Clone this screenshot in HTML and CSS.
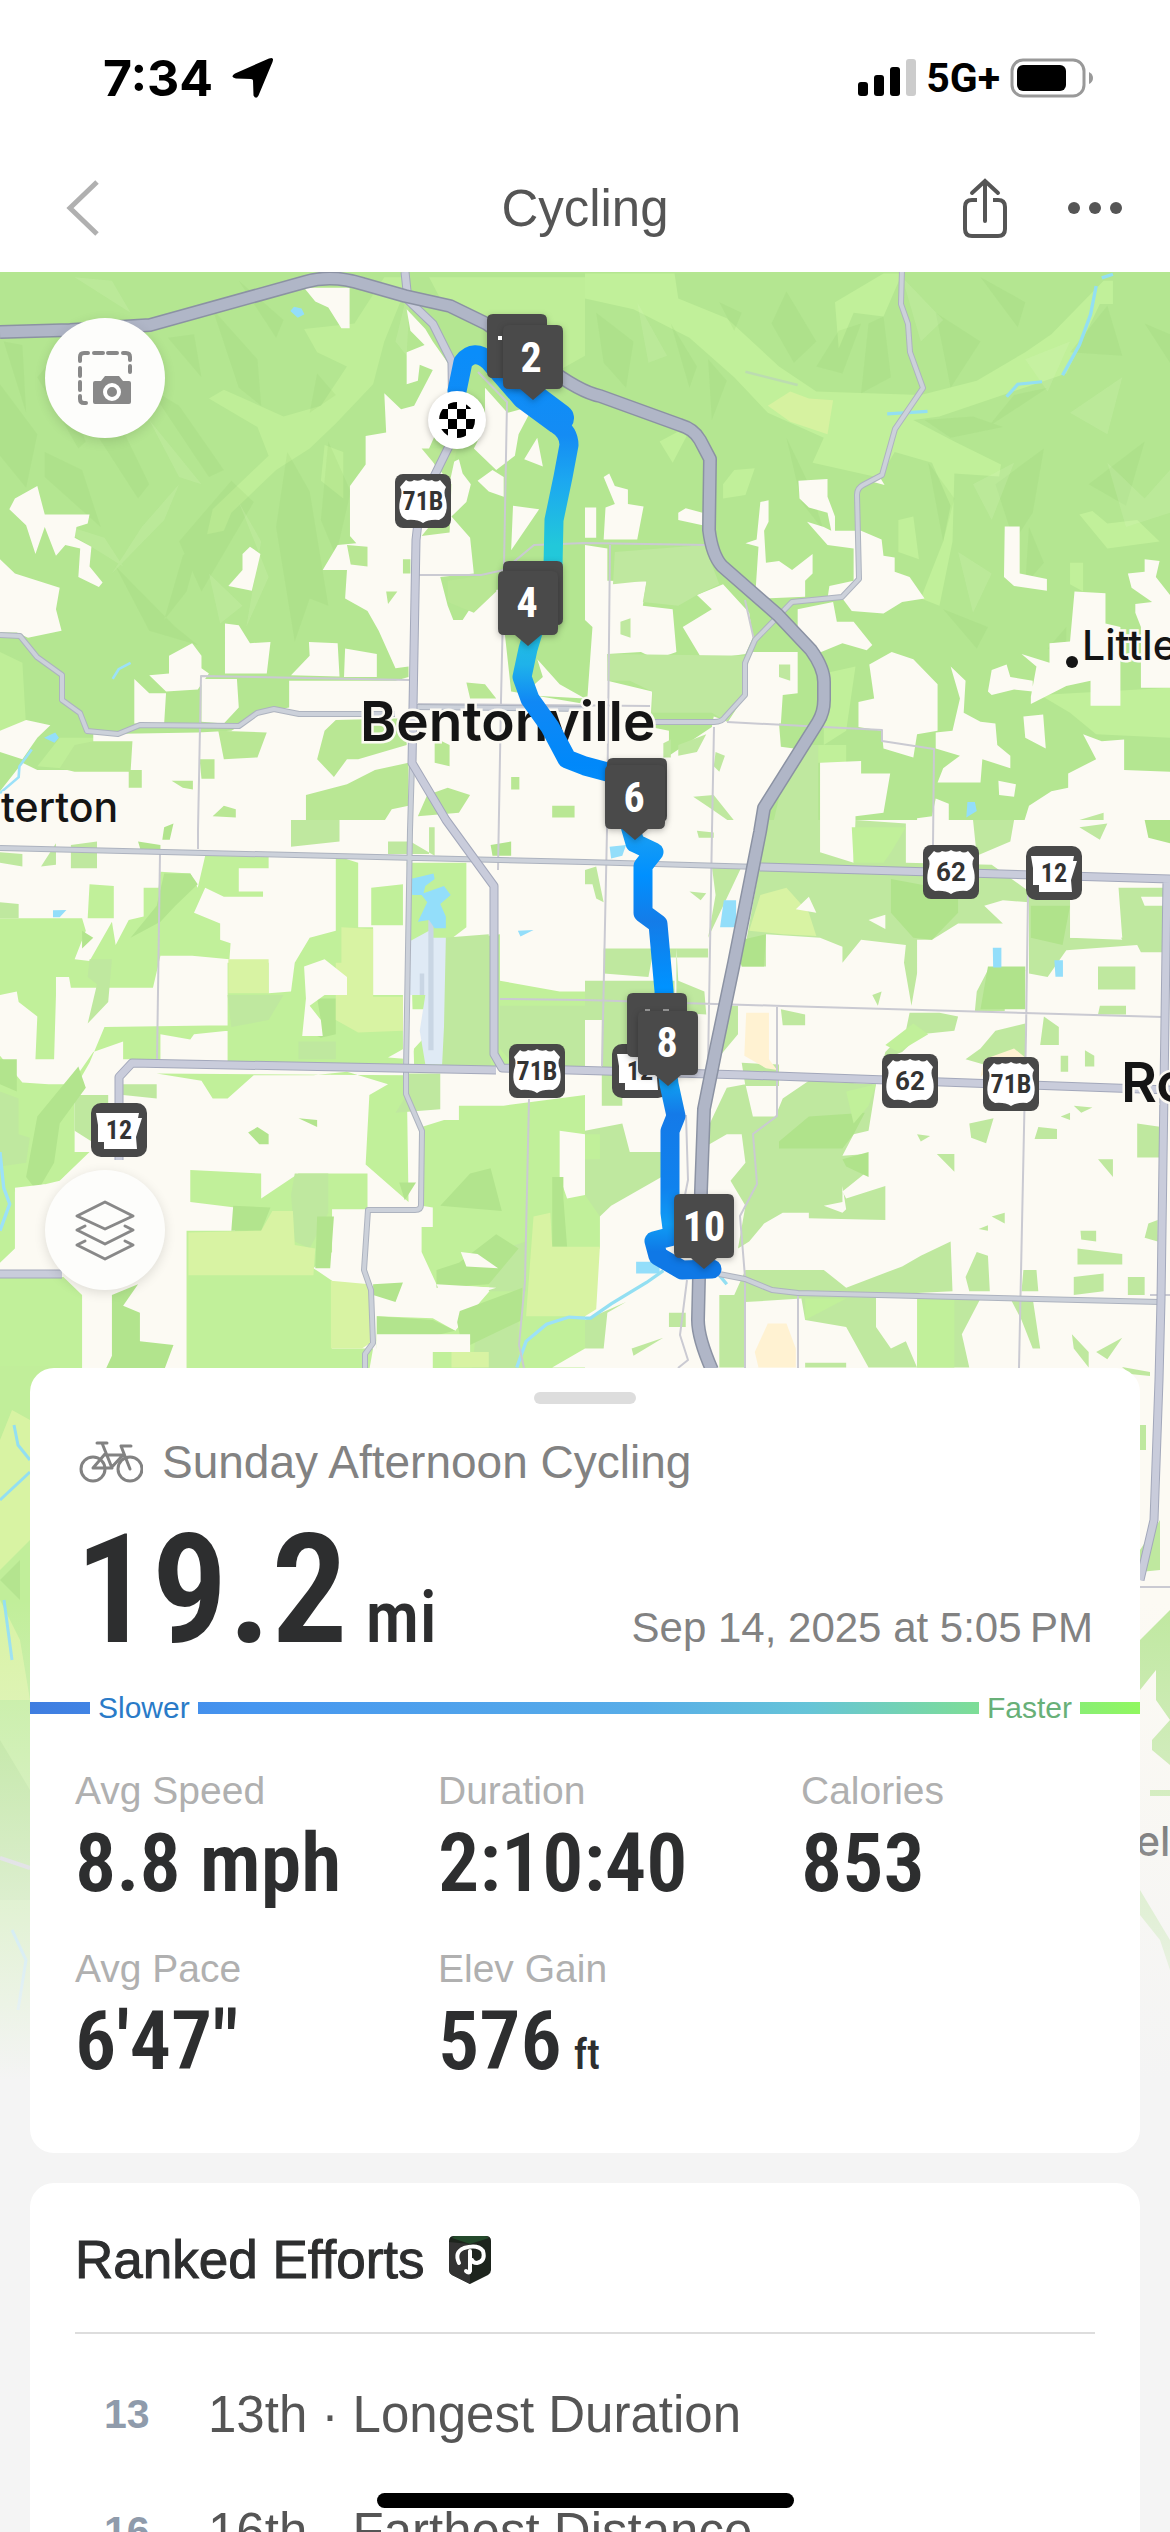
FILE: index.html
```html
<!DOCTYPE html>
<html lang="en">
<head>
    <meta charset="UTF-8">
    <meta name="viewport" content="width=device-width, initial-scale=1">
    <title>Cycling</title>
    <link rel="stylesheet" href="styles.css">
</head>
<body>
    <div class="status">
        <div class="status-side">
            <span class="time">7:34</span>
            <svg width="44" height="42" viewBox="0 0 44 42"><path d="M38 1.500Q43.500-.5 41.500 5L27.500 38.500Q25 43 22.500 38.500L22 23.500Q22 22 20 22L5 21.500Q-1.500 20 4 16.500Z"/></svg>
        </div>
        <div class="status-side">
            <svg width="58" height="38" viewBox="0 0 58 38">
                <rect x="0" y="23" width="10" height="14" rx="3"/>
                <rect x="16" y="16" width="10" height="21" rx="3"/>
                <rect x="32" y="8" width="10" height="29" rx="3"/>
                <rect x="48" y="0" width="10" height="37" rx="3" fill="#ccc"/>
            </svg>
            <span class="network">5G+</span>
            <svg width="84" height="40" viewBox="0 0 84 40">
                <rect x="2" y="2" width="72" height="36" rx="11" fill="none" stroke="#999" stroke-width="3"/>
                <rect x="7" y="7" width="49" height="26" rx="6"/>
                <path d="M79 14q4 2 4 6t-4 6z" fill="#999"/>
            </svg>
        </div>
    </div>

    <header class="nav">
        <button class="icon-btn back" aria-label="Back">
            <svg width="34" height="56" viewBox="0 0 34 56"><path d="M31 2L4 28l27 26" fill="none" stroke="#b0b0b0" stroke-width="5"/></svg>
        </button>
        <h1>Cycling</h1>
        <div class="nav-actions">
            <button class="icon-btn" aria-label="Share">
                <svg width="46" height="62" viewBox="0 0 46 62" fill="none" stroke="#555" stroke-width="4">
                    <path d="M15 23H10Q3 23 3 30V52Q3 59 10 59H36Q43 59 43 52V30Q43 23 36 23H31"/>
                    <path d="M23 44V4M10 16L23 4l13 12" stroke-linecap="round"/>
                </svg>
            </button>
            <button class="icon-btn" aria-label="More">
                <svg width="54" height="12" viewBox="0 0 54 12" fill="#555"><circle cx="6" cy="6" r="6"/><circle cx="27" cy="6" r="6"/><circle cx="48" cy="6" r="6"/></svg>
            </button>
        </div>
    </header>

    <main class="screen">
        <div class="map">
            <svg class="map-art" viewBox="0 272 1170 1928" preserveAspectRatio="xMidYMin slice">
                <defs>
                    <linearGradient id="pace" gradientUnits="userSpaceOnUse" x1="0" y1="353" x2="0" y2="1270">
                        <stop offset="0" stop-color="#0a8dfa"/>
                        <stop offset=".09" stop-color="#148cf4"/>
                        <stop offset=".14" stop-color="#1ca8f0"/>
                        <stop offset=".21" stop-color="#22c8da"/>
                        <stop offset=".28" stop-color="#22c6dc"/>
                        <stop offset=".34" stop-color="#1fb2ea"/>
                        <stop offset=".38" stop-color="#1088f5"/>
                        <stop offset=".45" stop-color="#0088fa"/>
                        <stop offset=".53" stop-color="#159cf5"/>
                        <stop offset=".57" stop-color="#0090ff"/>
                        <stop offset=".62" stop-color="#147ce8"/>
                        <stop offset=".69" stop-color="#0092ff"/>
                        <stop offset=".8" stop-color="#109af0"/>
                        <stop offset=".83" stop-color="#147ae8"/>
                        <stop offset=".91" stop-color="#0f82ee"/>
                        <stop offset=".95" stop-color="#0f9cf5"/>
                        <stop offset=".98" stop-color="#0f78e6"/>
                    </linearGradient>
                    <linearGradient id="fade" x1="0" y1="0" x2="0" y2="1">
                        <stop offset="0" stop-color="#f4f4f4" stop-opacity="0"/>
                        <stop offset="1" stop-color="#f4f4f4"/>
                    </linearGradient>
                    <symbol id="us" viewBox="0 0 56 54">
                        <rect width="56" height="54" rx="8" fill="#484848"/>
                        <path d="M11 6Q15 9 19 6Q24 8 28 5Q32 8 37 6Q41 9 45 6L51 13Q48 18 51 26Q54 42 44 46Q34 45 28 49Q22 45 12 46Q2 42 5 26Q8 18 5 13Z" fill="#fff"/>
                    </symbol>
                    <symbol id="state" viewBox="0 0 56 54">
                        <rect width="56" height="54" rx="10" fill="#484848"/>
                        <path d="M5 10H48L47 15H51L45 34L46 46H13V39H7V22z" fill="#fff"/>
                    </symbol>
                    <symbol id="pin" viewBox="0 0 60 76">
                        <path d="M6 0H54Q60 0 60 6V58Q60 64 54 64H43L30 75L17 64H6Q0 64 0 58V6Q0 0 6 0Z" fill="#4a4a4a"/>
                    </symbol>
                    <path id="hwy" d="M0 332L70 330L150 325L305 282Q332 274 363 284L405 296L450 306L487 324L545 366Q580 392 600 396L680 425Q694 429 700 440L710 459L709 530Q712 555 722 566L778 615L811 650Q824 668 824 682V700Q824 712 818 722L764 808L760 832L734 963L716 1049L704 1109L701 1191L698 1320Q698 1338 712 1370"/>
                    <path id="main" d="M405 272L408 300L433 324L452 362L453 438L420 505L416 540L412 763L446 820L494 886V1054L502 1068L745 1075L1170 1090M119 1160L119 1077L132 1063L496 1070M760 867L1170 879M1167 880L1161 1300L1159 1380L1154 1520L1140 1580M0 1274H62"/>
                    <path id="mid" d="M412 763L410 830L406 1070V1094L422 1131L421 1205Q421 1210 415 1210H368L364 1270L371 1290L373 1343L365 1354V1368M0 848L585 862L760 867M0 635L20 636L37 657L62 675V700L80 713L87 731L118 734L140 725L239 726L257 713L274 709L299 714H395M414 707L585 709M650 722H714Q722 722 725 717L745 695V663L755 640L792 602L842 597L859 579L857 495Q857 488 863 485L882 475L895 429L923 388L910 352L908 324L901 304L902 270M719 1274L745 1279L772 1290L798 1293L1160 1302"/>
                </defs>

                <rect y="272" width="1170" height="1928" fill="#b4e691"/>

                <!-- north west -->
                <g transform="translate(0 270) scale(.3731 .3571)">
                    <path fill="#bfee98" d="M815 165L950 150L1030 20H1100L1030 200L1000 320L900 430L830 500L740 560L620 680L600 730L555 740L570 670L720 520L690 440L560 360L600 335L760 410L860 380L930 270L850 230ZM1150 20H1568V240L1500 280L1300 130L1180 80ZM0 1070L60 1100L70 1280L0 1290ZM870 490L920 510V640L860 590ZM100 1390L160 1310L250 1310L340 1340L350 1390L220 1400ZM820 1470L990 1430L1000 1568H820Z"/>
                    <path fill="#8cc869" fill-opacity=".14" d="M100 300L210 500L230 480L140 250ZM10 200L70 400L60 210ZM240 430L370 640L400 600L330 450ZM400 330L560 580L600 560L480 380ZM570 110L640 330L700 380L690 250ZM640 30L760 140L740 190ZM770 510L740 720L790 1040L830 920L880 940L830 620ZM620 590L480 760L540 900L680 650ZM540 750L490 800L440 980L500 900ZM120 510L220 560L270 720L120 580ZM310 830L470 1000L530 1050L400 1010ZM880 480L940 620L900 800L860 700ZM0 320L100 460L70 610L0 520ZM450 190L540 300L520 180ZM850 290L900 350L830 400Z"/>
                    <path fill="#e0fbc0" fill-opacity=".18" d="M200 20L350 120L300 30ZM480 600L380 720L300 850L440 700ZM640 650L700 760L660 1000L720 860ZM560 850L590 990L650 940ZM130 700L330 830L280 750ZM400 420L540 600L480 580ZM1100 30L1060 200L1090 240Z"/>
                    <path fill="#fcfaf3" d="M815 50H937V163H915L880 105L845 88Z
                        M1090 110L1140 165L1160 200L1200 260L1210 360L1150 500L1170 560L1230 530L1240 570L1262 600L1250 650L1210 690L1260 750L1270 850L1180 860L1200 940L1215 980L1240 980L1290 900L1340 895L1370 1180L1568 1215V1568H210L0 1568V1460L60 1380L100 1400H340L350 1330L250 1325V1300L530 1295L620 1290L670 1260L700 1240L775 1225V1150L1060 1150L1095 1140V1110L1060 1115L1015 1010L985 955L925 920L930 840H865L905 770L955 765L938 745V605L980 545V465L1035 455L1030 345L1075 390L1110 380L1160 280L1125 265L1120 310L1090 320V230L1138 210L1100 170Z
                        M100 605L120 685H240L235 710L205 720L200 750L245 775L240 830L275 875L265 888L210 860L215 780L175 770L150 800L120 720L95 795L70 715L25 670L40 640Z
                        M0 810L40 850L160 890L150 950L165 1010L75 1030L45 1015H0Z
                        M670 775L698 795L675 898L612 885L650 840V795Z
                        M603 990L640 995L670 1045L725 1042L715 1130H603Z
                        M515 1045L540 1080V1115L560 1130L530 1175L445 1180L400 1135L453 1130V1080Z
                        M828 1042L905 1045L910 1138L780 1135L830 1080Z
                        M925 1060L1010 1075V1140H922Z
                        M360 1145L400 1185H445L440 1270H360Z
                        M540 1145H635L640 1225L600 1270L540 1265Z
                        M0 1290L70 1260L135 1275L100 1310L60 1370L0 1350Z
                        M1280 590L1320 560L1350 580V635L1310 620ZM1375 660L1445 670L1370 785ZM1440 470L1455 550L1405 530ZM1300 330L1360 400L1430 380L1390 460L1380 520L1330 560L1270 500L1300 440Z M1440 1090L1455 1140L1400 1190L1568 1200L1500 1160Z"/>
                    <path fill="#b9e794" d="M1130 500L1225 500L1200 620L1165 700L1130 745L1205 735L1210 600ZM1035 900H1065L1040 935ZM930 770L985 775V830L940 825ZM585 1290L715 1295L690 1365L600 1370ZM900 1260L1090 1255V1330L960 1370H930L895 1420L850 1370L870 1290ZM250 1320H355L350 1405H200L160 1395L200 1330ZM345 1400H380V1450H345ZM535 1370H575V1425H540ZM460 1430H517V1455L490 1450ZM570 1530L600 1500L632 1510V1533ZM1005 1400L1095 1380V1500L1050 1510L1020 1560H820V1470L930 1440ZM1165 1310L1205 1330V1390L1165 1380ZM1145 1470L1200 1450L1260 1470L1230 1520L1120 1530ZM1250 1155L1300 1160L1330 1200L1260 1200ZM1200 870L1330 850V900L1270 960L1200 930ZM1480 1500H1540V1533H1480ZM1370 1420H1392V1455H1370ZM1080 810H1100V850H1080Z"/>
                    <path fill="#93defa" d="M778 115l10-12 20 5 8 16-18 10zM118 1310l30-15 10 15-12 14z"/>
                    <path fill="none" stroke="#9ce1f8" stroke-width="7" d="M302 1145L318 1118L350 1100M85 1343L52 1390L50 1420L0 1465"/>
                </g>

                <!-- north east -->
                <g transform="translate(585 270) scale(.3731 .3571)">
                    <path fill="#c1f09a" d="M0 10H240L250 80L380 135L520 270L620 340L900 350L1050 310L1180 230L1250 180L1390 30H1415V95H1380L1290 290L1120 350L950 410L880 420L990 480L1115 545L1110 578L990 570L985 760L950 940L900 920L960 760L980 660L930 540L830 510L790 582L610 540L640 470L490 400L400 300L280 190L130 110L0 80ZM670 90L800 10H850L800 130L720 120L680 220ZM370 600L400 560L455 555L430 630L370 640ZM200 480L290 430L235 540ZM840 700L880 690L895 810L840 790ZM1325 685L1360 675L1400 710L1480 700L1540 760L1400 780ZM1300 820H1335V900L1300 880ZM640 1130L725 1110L700 1290L640 1330ZM1220 1190L1568 1170V1310L1370 1300L1300 1240ZM600 1330H700V1380H620Z"/>
                    <path fill="#d6f2a0" d="M490 380L550 340L600 360L665 365L650 460L550 425Z"/>
                    <path fill="#8cc869" fill-opacity=".15" d="M360 90L420 120L400 170ZM540 60L620 200L560 260L500 150ZM620 270L680 170L740 150L690 290ZM760 150L800 130L820 300L740 345ZM30 120L130 200L110 330L50 260ZM230 150L300 270L280 330ZM330 250L380 310L340 420ZM940 120L1060 200L980 330ZM1060 20L1160 160L1180 90ZM910 420L1040 410L1120 440L980 470ZM1080 440L1150 350L1240 330ZM920 540L990 640L960 760ZM1100 600L1230 500L1200 680L1150 760ZM1300 230L1400 100L1440 240ZM1190 720L1230 820L1180 880ZM540 470L600 600L640 730L580 650ZM960 950L1050 1060L1080 1000ZM1500 150L1568 260V180ZM1350 600L1500 480L1450 660ZM1240 1060L1290 1000V1080Z"/>
                    <path fill="#e0fbc0" fill-opacity=".18" d="M850 20L960 140L900 200ZM1180 250L1300 200L1240 340ZM1300 400L1440 300L1400 460ZM1040 600L1150 540L1090 700ZM140 90L220 240L170 260ZM1400 540L1500 640L1568 560V680L1450 720ZM1000 790L1090 850L1040 960Z"/>
                    <path fill="#fcfaf3" d="M0 665H30V750H0ZM50 580L65 570L80 605L115 615V655L157 662L140 755H50L55 665L80 655Z
                        M250 680L270 667L315 680V715L250 700ZM470 650L492 645V705L480 730L485 820L520 815L555 840L610 795V850L590 870V915L480 920L457 900L465 775L430 765L460 755Z
                        M572 590L650 585V635L670 690V730H740L795 755L800 800L830 805V845L870 860L910 920L850 930L800 962L715 955L690 920H650L655 885L720 870V780L650 770L595 705L640 720L660 730L650 680L600 665L575 640ZM760 590L790 580L803 602Z
                        M570 950L665 930L675 985L720 985L770 1050L755 1065L690 1045L620 1075L570 1030Z
                        M0 770L60 780V870L165 872L155 940L235 950L245 1070L190 1090L150 1070L60 1075V1150L180 1180L175 1280L225 1290V1360L340 1280L345 1250L385 1265L520 1270L525 1335L560 1340L490 1460L455 1560L0 1568V1290L20 1000L0 980Z
                        M262 1000L340 950L300 910L370 880L440 960L450 1030L430 1075L315 1092ZM440 1070H570V1185L530 1190L525 1270H380L430 1190Z
                        M822 1070L880 1090L945 1160V1290L890 1300L880 1365L800 1340L795 1290L733 1280V1210L775 1200L762 1105Z
                        M980 1110L1020 1150L1015 1240L1060 1265L1100 1270L1105 1330L1140 1360V1395L1065 1370L1060 1435H945L960 1395L1005 1360L940 1340V1295L985 1290L1005 1200Z
                        M1125 718H1165V850L1238 865V898L1150 885L1123 860Z M1312 900L1395 905V990L1435 1000V1220H1355V1150L1290 1165L1195 1215V1195L1210 1110L1170 1075L1245 1100V1045L1300 1040ZM1455 850L1500 845V810L1540 815L1530 860L1568 910V1170H1490V1000L1475 960V935L1520 930L1465 890Z
                        M1080 1180L1090 1120L1130 1105L1140 1140L1200 1150V1180L1150 1175L1090 1190ZM1175 1250L1228 1245L1235 1340L1180 1310Z
                        M1335 1300L1385 1320L1445 1315V1400L1568 1405V1568H1170L1190 1500L1250 1460L1295 1450V1410L1370 1370ZM630 1380L740 1375L740 1410H818L800 1520L725 1530V1568H630ZM940 1480L975 1495V1568H890V1535L930 1530ZM1108 1430L1155 1440L1150 1475L1110 1470Z"/>
                    <path fill="#bfe89f" d="M60 1075L435 1080L430 1190L380 1265L340 1240L180 1240V1180L120 1150H65ZM80 790L320 770L360 880L300 910L250 940L155 930L165 870L75 880ZM540 1390L600 1330H625V1568H500ZM95 985L122 975V1030L95 1020ZM520 1105H550V1150L520 1140ZM210 1325L230 1315V1365H210ZM250 1330L325 1300L300 1350L250 1360ZM350 1350L375 1360L360 1405L345 1390ZM290 1475L345 1470L420 1568L340 1510ZM1325 1540L1390 1520V1555H1325Z"/>
                    <path fill="none" stroke="#93dff2" stroke-width="9" d="M1385 22L1415 12M1370 45L1355 125L1325 210L1280 295M1130 355L1160 320L1225 313M810 403L918 396"/>
                    <path fill="none" stroke="#bcdcb0" stroke-width="7" d="M430 285L570 322"/>
                    <path fill="#93defa" d="M1025 1490l20 0 5 25-28 18z"/>
                </g>

                <!-- south west -->
                <g transform="translate(0 820) scale(.3731 .3571)">
                    <path fill="#fcfaf3" d="M0 0H1568V1568H0Z"/>
                    <path fill="#c1f09a" d="M0 275H220L230 310L200 390L240 395L300 285L310 350L345 280L385 270V190H425L430 145L510 150L530 190L550 100H720V135H640V200H705V215H600L550 190L520 260L590 290V335L618 345L615 390L515 380H430L410 470H190L185 440H150V490L145 670H95L100 550L50 510L45 480L0 490Z
                        M240 180L305 185V275H235ZM900 100L960 120V300H1000V600L610 610V400H720V485L780 480L790 400L830 330L900 310ZM995 190L1080 180V295H995ZM280 580L610 575V590L520 600L510 615L430 600V670H330V620L250 650L190 740L130 740L60 735L0 660V1568H220V1330L170 1280H0V1240L40 1200V1040L160 1010L240 930H200V770H190L240 680Z
                        M610 490H1080V690H610ZM420 710L1090 715L1095 1070L980 965L990 770L1040 740L930 705L840 715H680L610 780H570L540 730L420 710ZM510 980L700 990V1060L800 990L985 990V1090L890 1090V1210L840 1255L890 1290V1480H1000L985 1568H500V1150L630 1150V1085L510 1070Z
                        M1090 120H1250V300L1200 340L1340 320V450L1500 480H1568V690H1110L1100 320ZM1190 840H1230V800H1350L1568 770V880L1500 870V1000L1520 1060L1568 1050V1568H1160V1490L1010 1480V1390L1160 1395L1220 1430L1320 1310L1170 1300L1130 1210V1140L1160 1140V1085L1130 1080L1130 860Z"/>
                    <path fill="#bfe89f" d="M780 0H910V60L780 75ZM0 90L60 95V130L0 120ZM190 70L260 60V135H190ZM110 130L150 65V125ZM1100 60L1040 60V95H1150V20H1165V100ZM240 390H300L290 510L235 570L260 460L235 440ZM610 490H760L720 560L620 580ZM0 230L50 235V275H0ZM1190 330L1310 320L1315 690H1185ZM1340 520H1568V690H1380L1340 640ZM200 770H290V930L200 870ZM0 760L50 780V880L80 890L70 960L0 970ZM780 1050L790 990H880V1100L830 1200L790 1180ZM1090 710H1180V810L1060 820L1090 770ZM1320 1210L1410 1180V1320H1310ZM1280 1410L1390 1340V1568H1260ZM330 740H420V780L330 770ZM800 620H900V670H800Z"/>
                    <path fill="#b2e48d" d="M440 150H510L530 180L470 240L430 285L350 330L420 240ZM850 500H900V600L860 610L820 590L860 560ZM100 830L210 690L230 750L160 850L145 960L100 1040L70 1000ZM0 670H45V760L0 740ZM625 1080L725 1085L700 1150H620ZM1180 1080L1260 990L1315 975L1345 1095ZM370 1300L330 1360L375 1380V1460L465 1470L430 1568H270L300 1500V1330ZM850 1110H895L885 1255H845ZM1480 1000H1510V1060L1520 1195H1480ZM1230 1240L1330 1160L1390 1200L1310 1300L1170 1310V1260ZM1010 1390L1160 1400L1220 1430L1100 1460H1010ZM1000 1300L1080 1295L1060 1350L1000 1330ZM1220 1380L1400 1310V1400L1240 1480ZM250 330L220 360V310ZM370 60L430 70V95H380ZM440 20L465 10L455 55H435ZM800 835L850 840V860ZM665 875L690 860L720 880V908H695ZM1070 1015H1115L1085 1065ZM1315 70L1370 60V100H1320Z"/>
                    <path fill="#d8f3a3" d="M915 300L1000 305V495H1080V590L960 595L900 560V400H915ZM612 390H720V485H612ZM505 1155L700 1150L730 1095H785L790 1190L845 1200L840 1275H505ZM887 1290L990 1300L1000 1460L970 1480H887ZM1430 1110L1475 1100L1480 1195H1568V1390H1410ZM1210 1490H1310V1533H1210Z"/>
                    <path fill="#fcfaf3" d="M815 410L870 390L930 440V490H870L830 520L860 560L865 605H810L820 500ZM1100 530H1145V600L1110 640L1100 670L1040 665L1100 630ZM1340 170L1430 175L1420 240L1340 235ZM1350 290L1430 350L1420 380L1500 440L1490 475L1380 455L1340 440ZM1235 1210L1280 1215L1335 1255L1250 1250ZM1010 1440H1260V1490H1010ZM40 1030L120 1020V1165H45ZM1480 1533L1568 1480V1533ZM1330 1310L1170 1300L1220 1430L1240 1340Z"/>
                    <path fill="#dfeaf5" d="M1097 340L1150 310L1150 330H1195L1190 580L1185 685H1140L1125 590L1140 490H1097Z"/>
                    <path fill="#c9d6e4" d="M1148 265h14V645h-14zM1125 430h12v60h-12z"/>
                    <path fill="#93defa" d="M1100 165L1162 150L1165 165L1140 185L1135 205L1190 185L1208 210L1180 235L1195 270V303H1165L1150 280L1120 285L1145 230L1130 210H1105ZM142 253L178 252L160 272H142ZM1388 310L1430 308L1395 326Z"/>
                    <path fill="none" stroke="#9ce1f8" stroke-width="9" d="M0 930L10 1030L26 1075L0 1150M1385 1533L1410 1460L1465 1412L1525 1392L1568 1395"/>
                </g>

                <!-- south east -->
                <g transform="translate(585 820) scale(.3731 .3571)">
                    <path fill="#fcfaf3" d="M0 0H1568V1568H0Z"/>
                    <path fill="#bfe89f" d="M490 0H630V90L720 120L725 0L860 10V120L1090 125L1190 200V230L1120 225L1070 240L1120 290H1000L930 335H890V430L875 520L855 400L860 350L740 335L690 400V355L630 330L485 320V410L420 410ZM1040 0H1150L1140 60L1050 100ZM1190 200H1300V330H1568V370L1490 370L1480 350L1290 365L1240 440L1190 430ZM1050 480L1080 420H1180L1170 490H1125V535H1045ZM1375 410H1475V475H1375ZM1430 190H1568V330H1440Z
                        M0 140L30 130L50 230L30 220L20 180H0ZM50 360H330V385H180L170 440L50 430V360L100 350ZM0 450H240V560L300 540V690L100 705V800H45V560H0ZM245 360V540L325 545L320 480L250 450ZM340 130H420L330 330L350 210ZM385 520H410V600L330 700L380 560ZM0 870L100 850L120 930L205 930V1000L70 1080L30 1120L0 1200ZM330 860L380 750L430 740L450 830H510L530 780L600 730L780 740L760 870L720 880L690 940L755 935L750 990L690 1040L700 1060L805 1025V1120L600 1115V1100H530L480 1130L440 1180L410 1200L430 1080L390 1010L430 960L420 880H380L330 910ZM420 680L520 685V745H430ZM525 530L590 545V575H530ZM805 650L860 590L870 540H950L1000 550L990 590L900 600L850 650L800 670ZM1100 590L1180 570V700H1120L1020 670L1060 640ZM1230 550L1270 580V630H1220ZM1480 850L1545 860V945H1480ZM1380 520H1450V545H1375ZM1030 850L1095 835L1075 905L1035 890ZM1215 860L1265 865V893H1205ZM943 935H990V985ZM1328 1150H1370V1180L1330 1175ZM1320 1200L1440 1215V1245H1320ZM1090 1110L1125 1100V1130ZM890 880L925 885L900 900ZM1375 950H1415V1000ZM770 490L795 480L785 520ZM1275 660H1295V705H1275ZM1340 645L1365 660V690H1340ZM1275 830L1300 820V840ZM1310 800L1360 805L1330 820ZM1055 1145L1080 1135V1150ZM280 200L325 205L310 225ZM300 30L345 35V50H305ZM1325 20L1400 10L1380 55ZM0 1400L110 1350L60 1380L50 1480L0 1480Z
                        M430 1260L640 1260L700 1310L850 1250L900 1220L980 1180L985 1320L780 1330V1420L820 1480L860 1460L890 1533H760L700 1420L590 1400L580 1340L430 1350V1533H360V1330H400ZM1020 1280L1050 1210L1080 1220L1085 1320H1030ZM1175 1260L1210 1260L1215 1320H1170ZM1310 1280L1390 1270V1320L1310 1330ZM1455 1280H1500V1330H1455ZM1140 1340H1200L1220 1480H1200L1170 1400ZM1305 1440L1350 1490V1533L1310 1480ZM1370 1490L1440 1450L1400 1510ZM225 1380H270V1420H225ZM125 1480L210 1450L130 1500ZM1510 1130L1535 1120V1180L1500 1170ZM590 1520H700V1533H590ZM900 1340H1060L1010 1440L1030 1533H890Z"/>
                    <path fill="#b0e38b" d="M820 165L1000 200V260L930 335L880 330L820 260ZM520 900L600 830L750 820L720 880L690 920H520ZM1080 410H1180V530H1060ZM1195 240H1300L1280 350L1195 330ZM400 340L485 320L480 410H420ZM690 950L760 930V1000L700 970ZM1500 0H1568V65L1510 50Z"/>
                    <path fill="#c1f09a" d="M715 20H860L820 90L800 120H720ZM805 630L880 570L920 600L840 650ZM700 760L780 740L760 800L720 850ZM590 1340H700L590 1400ZM890 1340H990V1533H890ZM0 880H40V950H0ZM0 1050L40 1110V1200H0Z"/>
                    <path fill="#d8f3a3" d="M440 310L470 210L540 190L600 260L620 325L530 320ZM0 1195H40L30 1370L0 1390Z"/>
                    <path fill="#fff2d2" d="M432 540H493V670L515 700L485 695L427 660ZM490 1410H540L565 1480V1533H465L455 1490ZM1070 670L1150 640L1180 665L1100 680L1060 720Z"/>
                    <path fill="#fcfaf3" d="M565 250L600 215L620 260ZM760 280L805 265V305ZM640 1080L690 1070V1025L700 1090L690 1100ZM1300 330L1320 230L1400 200L1420 300L1440 335ZM1200 590H1220V620H1195ZM1490 215H1550V240H1500Z"/>
                    <path fill="#93defa" d="M66 75L110 70L100 100L70 108ZM372 225L405 225V300H362ZM1093 358h23v55h-22zM1258 393h23v46h-20zM137 1237H200V1270H137Z"/>
                    <path fill="none" stroke="#93dff2" stroke-width="9" d="M210 1262L165 1295L70 1355L15 1395H0M360 1275L380 1300"/>
                </g>

                <!-- strips either side of the card -->
                <path fill="#c1ee9a" d="M0 1366H60V2200H0Z"/>
                <path fill="#d8f3a3" d="M0 1440L12 1410L30 1420V1540L0 1570ZM0 1600L20 1640L30 1700H0Z"/>
                <path fill="#b4e48f" d="M0 1740L30 1790V1900H0ZM0 1580L20 1560V1600Z"/>
                <path fill="none" stroke="#93dff2" stroke-width="3" d="M14 1425L18 1445L30 1460M30 1472L0 1500M4 1600L12 1660M12 1930L26 1960L18 2010"/>
                <path fill="none" stroke="#cfd0d8" stroke-width="4" d="M0 1858L30 1868"/>
                <path fill="#fcfaf3" d="M1110 1367H1170V2200H1110Z"/>
                <path fill="#bfe89f" d="M1122 1367L1150 1372V1376L1130 1374ZM1140 1425H1146V1450H1140ZM1140 1550L1160 1520V1570L1140 1572ZM1140 1640L1170 1610V1720L1156 1700V1670L1140 1690ZM1150 1790H1170V1796H1150ZM1152 1740L1170 1720V1765L1152 1750ZM1140 1890L1170 1940V1970L1160 1940L1140 1915Z"/>

                <g class="roads">
                    <path class="minor" d="M198 849V830L201 676L409 680M160 854L157 1061M478 372L507 402L504 566L501 700L498 870M418 575H481L504 570L534 545L585 543L708 545M418 704L650 706M610 545L607 830L602 1066M714 727L712 830L708 1066M727 722L882 730V741L934 749L933 845M500 999L585 1000L783 1006L1163 1017M777 1006V1116L753 1134L757 1184L740 1216L745 1277V1368M1028 895L1026 1034L1019 1368M529 1099L525 1281L519 1345L524 1368M798 1295V1368M745 600L754 640M687 1280L680 1335L688 1360L678 1368M686 1115L688 1180L684 1200M1140 1587H1170M1150 1295H1170"/>
                    <use href="#mid" class="mid-case"/><use href="#mid" class="mid"/>
                    <use href="#main" class="main-case"/><use href="#main" class="main"/>
                    <use href="#hwy" class="hwy-case"/><use href="#hwy" class="hwy"/>
                </g>

                <g class="shields">
                    <use href="#us" x="395" y="474" width="56" height="54"/><text x="423" y="510">71B</text>
                    <use href="#us" x="509" y="1044" width="56" height="54"/><text x="537" y="1080">71B</text>
                    <use href="#us" x="983" y="1057" width="56" height="54"/><text x="1011" y="1093">71B</text>
                    <use href="#state" x="91" y="1103" width="56" height="54"/><text x="119" y="1139">12</text>
                    <use href="#state" x="1026" y="846" width="56" height="54"/><text x="1054" y="882">12</text>
                    <use href="#state" x="612" y="1044" width="56" height="54"/><text x="640" y="1080">12</text>
                    <g class="wide">
                        <use href="#us" x="923" y="845" width="56" height="54"/><text x="951" y="881">62</text>
                        <use href="#us" x="882" y="1054" width="56" height="54"/><text x="910" y="1090">62</text>
                    </g>
                </g>

                <g class="places">
                    <text class="city" x="360" y="741">Bentonville</text>
                    <text class="city" x="1121" y="1102">Ro</text>
                    <text x="1" y="822">terton</text>
                    <text x="1082" y="660">Little</text>
                    <text x="1136" y="1856">el</text>
                    <circle cx="1072" cy="662" r="6"/>
                </g>

                <g class="route">
                    <path d="M457 391L463 362Q474 348 489 361L522 399L556 424Q569 432 569 445L563 477L554 520L553 566L528 649L522 677L530 699L550 727L567 759L585 766L615 774L635 843L654 852L643 866V913L658 924L664 991L666 1060L669 1084L676 1116L670 1131V1213L673 1236L654 1241L658 1256L682 1270L712 1269"/>
                    <path class="overlap" d="M520 388L560 418"/>
                </g>

                <g class="pins">
                    <use href="#pin" x="487" y="314" width="60" height="76"/>
                    <use href="#pin" x="503" y="325" width="60" height="76"/>
                    <rect x="498" y="336" width="4" height="4" fill="#fff"/>
                    <text x="531" y="372">2</text>
                    <use href="#pin" x="503" y="561" width="60" height="76"/>
                    <use href="#pin" x="498" y="571" width="60" height="76"/>
                    <text x="527" y="617">4</text>
                    <use href="#pin" x="607" y="758" width="60" height="76"/>
                    <use href="#pin" x="605" y="765" width="60" height="76"/>
                    <text x="634" y="812">6</text>
                    <use href="#pin" x="627" y="993" width="60" height="76"/>
                    <use href="#pin" x="638" y="1011" width="60" height="76"/>
                    <path d="M645 1010h5M663 1010h6" stroke="#ddd" stroke-width="1"/>
                    <text x="667" y="1057">8</text>
                    <use href="#pin" x="674" y="1194" width="60" height="76"/>
                    <text x="704" y="1241">10</text>
                </g>

                <g class="finish">
                    <circle cx="457" cy="420" r="29" fill="#fff"/>
                    <clipPath id="ball"><circle cx="457" cy="420" r="18"/></clipPath>
                    <path clip-path="url(#ball)" d="M448 400h9v9h-9zM466 400h9v9h-9zM439 409h9v10h-9zM457 409h9v10h-9zM448 419h9v10h-9zM466 419h9v10h-9zM439 429h9v10h-9zM457 429h9v10h-9z"/>
                </g>

                <rect y="1600" width="1170" height="480" fill="url(#fade)"/>
                <rect y="2079" width="1170" height="121" fill="#f4f4f4"/>
            </svg>

            <button class="map-btn snapshot" aria-label="Snapshot">
                <svg width="54" height="54" viewBox="0 0 54 54">
                    <path d="M2 10V6Q2 2 6 2H10M16 2h9M30 2h9M45 2h3Q52 2 52 6V9M52 15v6M2 17v8M2 31v8M2 45v3Q2 52 6 52H8" fill="none" stroke="#888" stroke-width="4" stroke-linecap="round"/>
                    <path d="M16 30H23L27 25H41L45 30H51Q53 30 53 32V51Q53 53 51 53H17Q15 53 15 51V32Q15 30 17 30Z" fill="#888"/>
                    <circle cx="34" cy="41" r="7" fill="none" stroke="#fff" stroke-width="4"/>
                </svg>
            </button>
            <button class="map-btn layers" aria-label="Map layers">
                <svg width="62" height="62" viewBox="0 0 62 62" fill="none" stroke="#888" stroke-width="3" stroke-linejoin="round" stroke-linecap="round">
                    <path d="M31 3L59 17L31 30L3 17ZM11 27L3 31L31 45L59 31L51 27M11 42L3 46L31 60L59 46L51 42"/>
                </svg>
            </button>
        </div>

        <div class="sheet">
            <section class="card summary">
                <div class="handle"></div>
                <div class="activity">
                    <svg width="64" height="44" viewBox="0 0 64 44" fill="none" stroke="#828282" stroke-width="3" stroke-linecap="round" stroke-linejoin="round">
                        <circle cx="14" cy="29" r="12"/><circle cx="51" cy="29" r="12"/>
                        <path d="M18 3H28M23 3L33 28M27 15H44L32 28H14L26 14M51 29L42 6H52"/>
                    </svg>
                    <h2>Sunday Afternoon Cycling</h2>
                </div>
                <div class="headline">
                    <p class="distance">19.2<span>mi</span></p>
                    <p class="date">Sep 14, 2025 at 5:05&#8239;PM</p>
                </div>
                <div class="pace-bar">
                    <span class="slower">Slower</span>
                    <span class="faster">Faster</span>
                </div>
                <dl class="stats">
                    <div><dt>Avg Speed</dt><dd>8.8 mph</dd></div>
                    <div><dt>Duration</dt><dd>2:10:40</dd></div>
                    <div><dt>Calories</dt><dd>853</dd></div>
                    <div><dt>Avg Pace</dt><dd>6'47"</dd></div>
                    <div><dt>Elev Gain</dt><dd>576<span>ft</span></dd></div>
                </dl>
            </section>

            <section class="card efforts">
                <div class="efforts-head">
                    <h3>Ranked Efforts</h3>
                    <svg width="42" height="48" viewBox="0 0 42 48">
                        <path d="M5 0H37Q42 0 42 5V34Q42 37 39 39L21 48L3 39Q0 37 0 34V5Q0 0 5 0Z" fill="#1d241d"/>
                        <path d="M3 2Q4 0 6 0H36Q39 0 40 2L21 8Z" fill="#24492b"/>
                        <path d="M0 6L21 8V48L3 39Q0 37 0 34Z" fill="#333"/>
                        <path d="M10 27Q5 16 15 12Q29 8 34 15Q37 25 28 27Q24 27 23 24M21 15V35Q20 38 17 35" fill="none" stroke="#fff" stroke-width="4" stroke-linecap="round"/>
                    </svg>
                </div>
                <ol class="effort-list">
                    <li><span class="rank">13</span>13th · Longest Duration</li>
                    <li><span class="rank">16</span>16th · Farthest Distance</li>
                </ol>
            </section>
        </div>
    </main>
    <div class="home-bar"></div>
</body>
</html>
```
FILE: styles.css
```css
* { box-sizing: border-box; margin: 0; padding: 0; }
body { height: 100vh; overflow: hidden; display: flex; flex-direction: column; background: #fff; font-family: "Liberation Sans", Arial, sans-serif; color: #2d2e2f; }
button { border: none; background: none; cursor: pointer; }
svg { display: block; flex: none; }

/* status bar */
.status { height: 144px; padding: 12px 76px 0 103px; display: flex; align-items: center; justify-content: space-between; color: #000; font-weight: 700; }
.status-side { display: flex; align-items: center; gap: 10px; }
.time { font-family: Inter, sans-serif; font-size: 50px; margin-right: 8px; }
.network { font-family: Roboto, sans-serif; font-size: 41px; }

/* title bar */
.nav { height: 128px; padding: 0 48px; display: grid; grid-template-columns: 1fr auto 1fr; align-items: center; }
.nav h1 { font-size: 51px; font-weight: 400; color: #555; }
.nav-actions { display: flex; align-items: center; justify-content: flex-end; gap: 60px; }
.icon-btn { justify-self: start; }
.back { margin-left: 18px; }

/* map and sheet share one cell, the sheet lies over the map */
.screen { flex: 1; min-height: 0; overflow: hidden; display: grid; grid-template-columns: minmax(0, 1fr); align-items: start; }
.map, .sheet { grid-area: 1 / 1; }
.map { position: relative; background: #f4f4f4; align-self: stretch; }
.map-art { width: 100%; }
.map-btn { position: absolute; left: 45px; width: 120px; height: 120px; border-radius: 50%; background: #fdfdfb; display: grid; place-items: center; box-shadow: 0 3px 12px rgba(0, 0, 0, .12); }
.snapshot { top: 46px; }
.layers { top: 898px; }

.roads path, .roads use { fill: none; stroke-linejoin: round; }
.minor { stroke: #cacad2; stroke-width: 2; }
.mid-case { stroke: #adb3bf; stroke-width: 6; }
.mid { stroke: #ccd1da; stroke-width: 4; }
.main-case { stroke: #a3a8bb; stroke-width: 9; }
.main { stroke: #c9ccdb; stroke-width: 7; }
.hwy-case { stroke: #8b92a3; stroke-width: 14; }
.hwy { stroke: #b0b6c7; stroke-width: 11; }
.shields text, .pins text { font-family: "Roboto Condensed", Roboto, sans-serif; font-weight: 700; text-anchor: middle; }
.shields text { font-size: 26px; fill: #333; }
.shields .wide text { font-family: Roboto, sans-serif; }
.pins text { font-size: 42px; fill: #fff; }
.pins use, .finish circle { filter: drop-shadow(0 2px 3px rgba(0, 0, 0, .25)); }
.places { fill: #151515; stroke: #fcfaf3; stroke-width: 5; paint-order: stroke; font-family: Inter, sans-serif; font-size: 41px; font-weight: 500; }
.places .city { font-size: 55px; font-weight: 600; }
.places circle { stroke: none; }
.route { fill: none; stroke: url(#pace); stroke-width: 19; stroke-linecap: round; stroke-linejoin: round; }
.overlap { stroke-width: 28; }

/* cards */
.sheet { position: relative; padding: 1096px 30px 0; display: grid; grid-template-columns: minmax(0, 1fr); gap: 30px; }
.card { background: #fff; border-radius: 24px; }
.summary { padding: 24px 0 48px; }
.handle { width: 102px; height: 12px; margin: 0 auto; border-radius: 6px; background: #ddd; }
.activity { display: flex; align-items: center; gap: 19px; height: 52px; margin: 32px 50px 0 49px; color: #828282; }
.activity h2 { font-size: 46px; font-weight: 400; }
.headline { display: flex; align-items: baseline; justify-content: space-between; height: 156px; margin: 24px 47px 0 45px; }
.distance, .stats dd { font-family: "Roboto Condensed", Roboto, sans-serif; font-weight: 600; }
.distance { font-size: 152px; line-height: 156px; }
.distance span { margin-left: 18px; font-size: 72px; font-weight: 500; }
.date { font-size: 42px; color: #828282; }
.pace-bar { display: flex; justify-content: space-between; margin-top: 23px; padding: 0 60px; font-size: 30px; line-height: 34px; background: linear-gradient(90deg, #3f7de0, #4696f0 20%, #58ade8 55%, #66c4d8 70%, #80e090 87%, #90f860) center / 100% 12px no-repeat; }
.pace-bar span { background: #fff; padding: 0 8px; }
.slower { color: #2a7bc8; }
.faster { color: #68b078; }
.stats { display: grid; grid-template-columns: 363px 363px 1fr; row-gap: 34px; padding: 44px 0 0 45px; }
.stats dt { font-size: 39px; line-height: 44px; color: #b0b0b0; }
.stats dd { font-size: 82px; line-height: 100px; white-space: nowrap; }
.stats dd span { margin-left: 12px; font-size: 42px; font-weight: 500; }

.efforts { padding: 0 45px; }
.efforts-head { display: flex; align-items: center; gap: 24px; height: 151px; padding-top: 4px; border-bottom: 2px solid #ddd; }
.efforts h3 { font-size: 53px; font-weight: 400; -webkit-text-stroke: 1px; }
.effort-list { list-style: none; padding-top: 22px; }
.effort-list li { display: flex; align-items: center; height: 117px; padding-left: 29px; font-size: 51px; color: #555; }
.rank { width: 104px; font-size: 41px; font-weight: 700; color: #8f9bab; }

.home-bar { position: fixed; left: 50%; bottom: 24px; width: 417px; height: 15px; margin-left: -208px; border-radius: 8px; background: #000; }
```
